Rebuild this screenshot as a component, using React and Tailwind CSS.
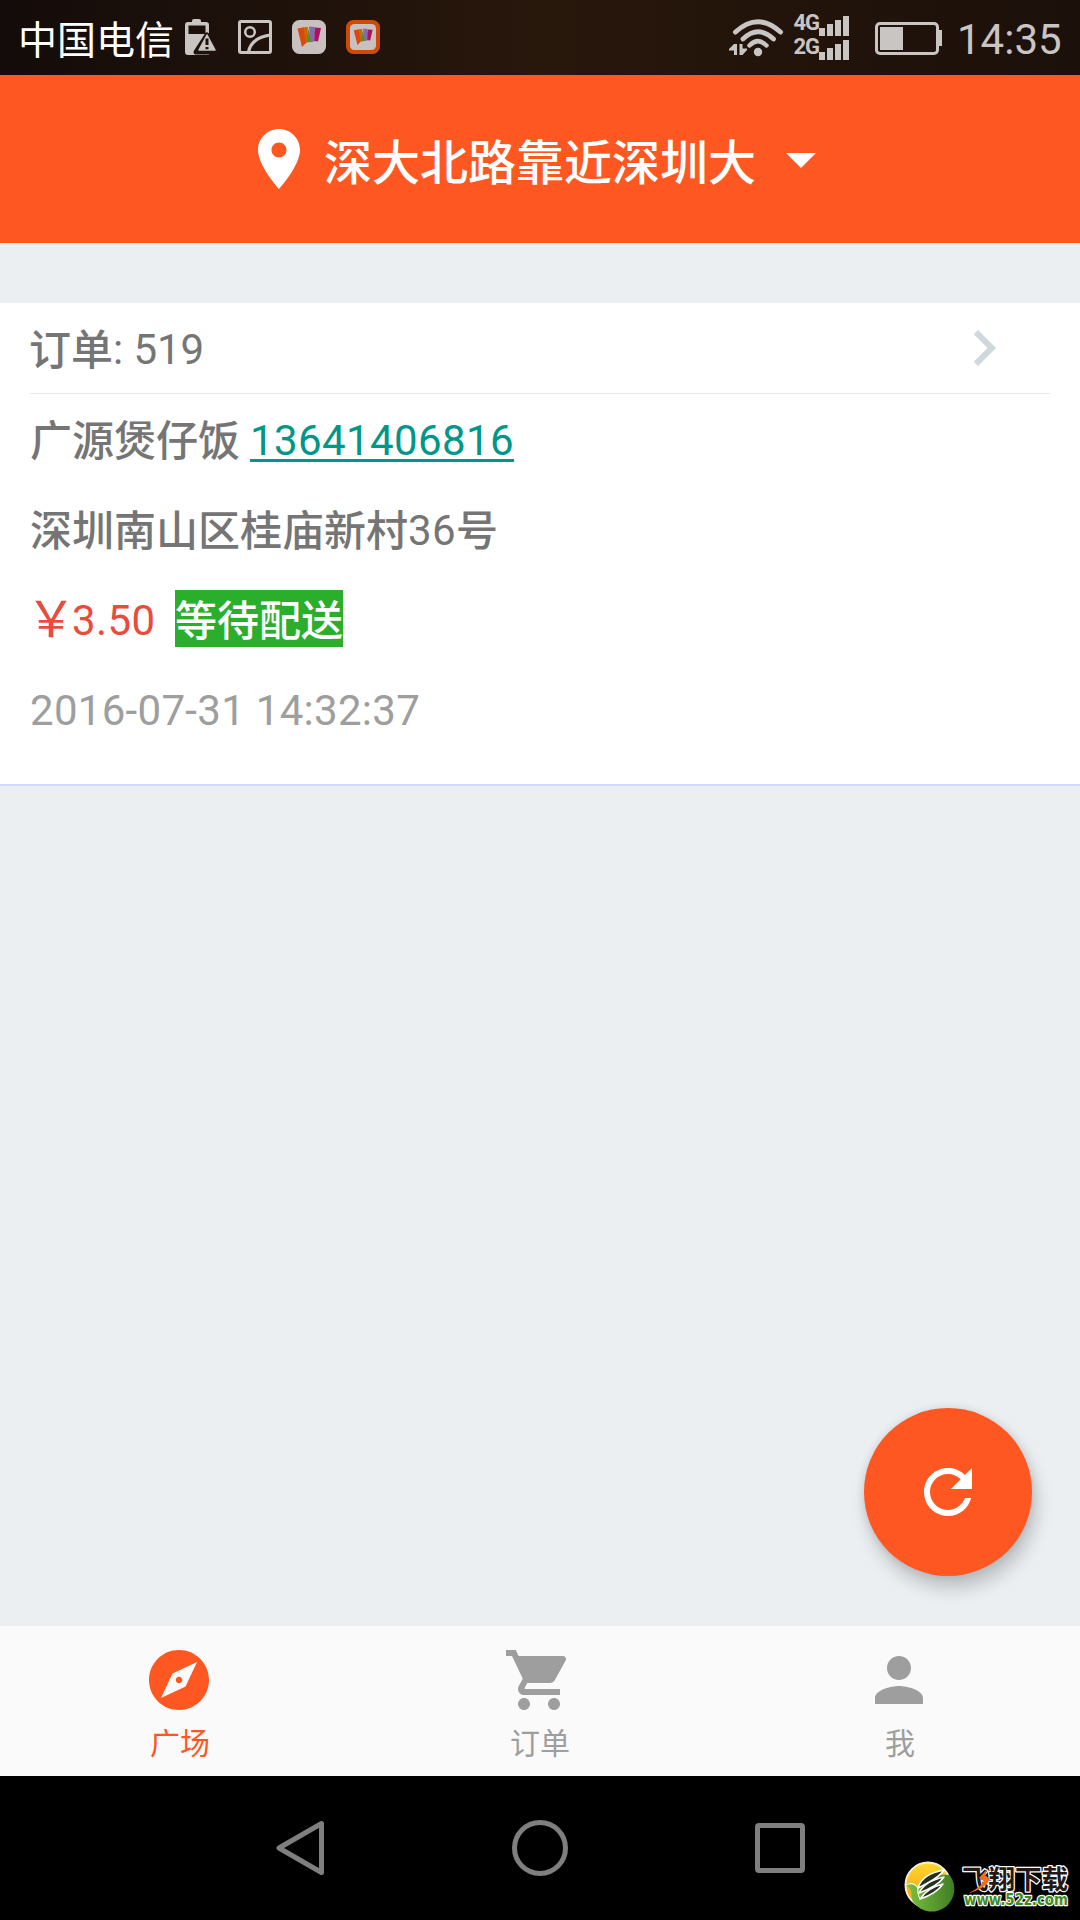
import React from "react";

const FONT = "font-['Roboto','Noto_Sans_CJK_SC',sans-serif]";

function MaterialIcon({ d, className = "" }) {
  return (
    <svg viewBox="0 0 24 24" className={"size-[72px] shrink-0 fill-current " + className}>
      <path d={d} />
    </svg>
  );
}

const ICONS = {
  place:
    "M12 2C8.13 2 5 5.13 5 9c0 5.25 7 13 7 13s7-7.75 7-13c0-3.87-3.13-7-7-7zm0 9.5c-1.38 0-2.5-1.12-2.5-2.5s1.12-2.5 2.5-2.5 2.5 1.12 2.5 2.5-1.12 2.5-2.5 2.5z",
  drop: "M7 10l5 5 5-5z",
  chevron: "M10 6L8.59 7.41 13.17 12l-4.58 4.59L10 18l6-6z",
  refresh:
    "M17.65 6.35C16.2 4.9 14.21 4 12 4c-4.42 0-7.99 3.58-7.99 8s3.57 8 7.99 8c3.73 0 6.84-2.55 7.73-6h-2.08c-.82 2.33-3.04 4-5.65 4-3.31 0-6-2.69-6-6s2.69-6 6-6c1.66 0 3.14.69 4.22 1.78L13 11h7V4l-2.35 2.35z",
  explore:
    "M12 10.9c-.61 0-1.1.49-1.1 1.1s.49 1.1 1.1 1.1c.61 0 1.1-.49 1.1-1.1s-.49-1.1-1.1-1.1zM12 2C6.48 2 2 6.48 2 12s4.48 10 10 10 10-4.48 10-10S17.52 2 12 2zm2.19 12.19L6 18l3.81-8.19L18 6l-3.81 8.19z",
  cart: "M7 18c-1.1 0-1.99.9-1.99 2S5.9 22 7 22s2-.9 2-2-.9-2-2-2zM1 2v2h2l3.6 7.59-1.35 2.45c-.16.28-.25.61-.25.96 0 1.1.9 2 2 2h12v-2H7.42c-.14 0-.25-.11-.25-.25l.03-.12.9-1.63h7.45c.75 0 1.41-.41 1.75-1.03l3.58-6.49c.08-.14.12-.31.12-.48 0-.55-.45-1-1-1H5.21l-.94-2H1zm16 16c-1.1 0-1.99.9-1.99 2s.89 2 1.99 2 2-.9 2-2-.9-2-2-2z",
  person:
    "M12 12c2.21 0 4-1.79 4-4s-1.79-4-4-4-4 1.79-4 4 1.79 4 4 4zm0 2c-2.67 0-8 1.34-8 4v2h16v-2c0-2.66-5.33-4-8-4z",
};

function BatteryAlertIcon() {
  return (
    <svg viewBox="0 0 32 38" className="h-[38px] w-8 overflow-visible">
      <path
        fill="#c9c5c3"
        fillRule="evenodd"
        d="M8 2Q8 0 10 0h5q2 0 2 2v1h5q3 0 3 3v30H4Q1 36 1 33V6q0-3 3-3h4zM4.500 6.500V15h17V6.500z"
      />
      <path d="M23 16L33 33H12z" fill="#1f120a" stroke="#1f120a" strokeWidth="5" strokeLinejoin="round" />
      <path d="M23 16L31 31H15z" fill="#c9c5c3" stroke="#c9c5c3" strokeWidth="1.500" strokeLinejoin="round" />
      <path d="M23 19.500v6.500M23 28v2.300" stroke="#1f120a" strokeWidth="3" />
    </svg>
  );
}

function PictureIcon() {
  return (
    <svg viewBox="0 0 34 34" className="size-[34px]" fill="none" stroke="#c9c5c3" strokeWidth="3">
      <rect x="1.500" y="1.500" width="31" height="31" rx="1.500" />
      <circle cx="12" cy="12" r="4.800" strokeWidth="2.500" />
      <path d="M10.500 32Q13 18 32 15" strokeWidth="3.200" />
    </svg>
  );
}

function CardsAppIcon({ framed }) {
  return (
    <svg viewBox="0 0 34 34" className="size-[34px]">
      <rect width="34" height="34" rx="7.500" fill={framed ? "#cd4a0b" : "#c9c1bf"} />
      {framed && <rect x="4" y="4" width="26" height="26" rx="4.500" fill="#c9c1bf" />}
      <g transform={framed ? "translate(3.400 3.400) scale(.8)" : undefined}>
        <path d="M23 7.500l6 .5-3 13.500-6-1z" fill="#b0105f" />
        <path d="M17 6.500l6 .5-.5 14.500-4 .5z" fill="#8869ae" />
        <path d="M16.500 9l3.500 13-7 .5z" fill="#5f8a35" />
        <path d="M10 7.500l6-.5-1.500 16-3 1z" fill="#c9660c" />
        <path d="M5.500 8.500l6-1 2 16-3.500 3.500z" fill="#da480e" />
      </g>
    </svg>
  );
}

function WifiIcon() {
  return (
    <svg viewBox="0 0 55 38" className="h-[38px] w-[55px]" fill="none" stroke="#c9c5c3" strokeLinecap="round">
      <path d="M6.500 13Q29 -7.500 51.500 13" strokeWidth="5" />
      <path d="M14 20Q29 5.500 44.500 20" strokeWidth="4.800" />
      <path d="M20.500 26.500Q29 18 37.500 26.500" strokeWidth="4.500" />
      <circle cx="29" cy="33" r="4.200" fill="#c9c5c3" stroke="none" />
      <path d="M8 25v11H5v-4.500H0V30l5-5zM10.500 25h3v4.500H18V31l-4.500 5h-3z" fill="#c9c5c3" stroke="none" />
    </svg>
  );
}

function SignalBars() {
  return (
    <div className="flex h-5 items-end gap-[2px]">
      <i className="h-2 w-1.5 bg-[#c9c5c3]" />
      <i className="h-3 w-1.5 bg-[#c9c5c3]" />
      <i className="h-4 w-1.5 bg-[#c9c5c3]" />
      <i className="h-5 w-1.5 bg-[#c9c5c3]" />
    </div>
  );
}

function SignalRow({ label }) {
  return (
    <div className="flex h-6 items-start">
      <span className="w-[26px] text-right text-[22px] leading-[17px] font-bold tracking-[-1px]">{label}</span>
      <div className="pt-[2px]">
        <SignalBars />
      </div>
    </div>
  );
}

function StatusBar() {
  return (
    <div className="flex h-[75px] items-start bg-linear-to-r from-[#140c0a] via-[#28170b] to-[#1b100a] text-[#c9c5c3]">
      <div className="ml-[18px] w-[166px] pt-[12px] text-[39px] leading-[58px] whitespace-nowrap text-white">中国电信</div>
      <div className="mt-[19px] flex items-start">
        <BatteryAlertIcon />
        <div className="mt-px ml-[22px] flex gap-5">
          <PictureIcon />
          <CardsAppIcon />
          <CardsAppIcon framed />
        </div>
      </div>
      <div className="ml-auto flex items-start pr-[18px]">
        <div className="mt-[19px]">
          <WifiIcon />
        </div>
        <div className="mt-[14px] ml-[9px]">
          <SignalRow label="4G" />
          <SignalRow label="2G" />
        </div>
        <svg viewBox="0 0 68 34" className="mt-[22px] ml-[26px] h-[34px] w-[68px]">
          <rect x="1.500" y="1.500" width="61" height="30" rx="3.500" fill="none" stroke="#c9c5c3" strokeWidth="3" />
          <rect x="5" y="5" width="23" height="23" fill="#c9c5c3" />
          <path d="M63 8h4v16h-4z" fill="#c9c5c3" />
        </svg>
        <div className="mt-[15px] ml-[14px] w-[105px] text-[42px] leading-[49px] whitespace-nowrap">14:35</div>
      </div>
    </div>
  );
}

function OrderCard() {
  return (
    <div className="h-[483px] border-b-2 border-[#d0dafb] bg-white px-[30px] text-[42px] whitespace-pre text-[#757575]">
      <div className="flex h-[91px] items-center justify-between border-b border-[#eaeaea] pr-[30px]">
        <span className="flex items-center pt-[3px]">
          <span className="-ml-px pt-[2px] font-medium">订单</span>
          <span className="tracking-[-.1px]">: 519</span>
        </span>
        <MaterialIcon d={ICONS.chevron} className="text-[#cfd8dc]" />
      </div>
      <div className="flex h-[90px] items-center pt-[3px]">
        <span className="pt-[2px] font-medium">广源煲仔饭</span>
        <span className="ml-[10px] tracking-[.4px] text-[#009688] underline decoration-[3px] underline-offset-[4px]">13641406816</span>
      </div>
      <div className="flex h-[90px] items-center pt-[3px]">
        <span className="pt-[2px] font-medium">深圳南山区桂庙新村</span>
        <span className="tracking-[.4px]">36</span>
        <span className="pt-[2px] font-medium">号</span>
      </div>
      <div className="flex h-[90px] items-center">
        <span className="flex w-[145px] items-center pt-[2px] text-[#e74c3c]">
          <span className="-ml-[4px] w-[46px] text-[50px] leading-[57px]">￥</span>
          <span className="tracking-[.4px]">3.50</span>
        </span>
        <span className="-mt-px h-[57px] bg-[#2bae2b] leading-[63px] font-medium text-white">等待配送</span>
      </div>
      <div className="flex h-[90px] items-center pt-[2px] text-[#9e9e9e]">
        <span className="tracking-[.3px]">2016-07-31 14:32:37</span>
      </div>
    </div>
  );
}

function Tab({ icon, label, active }) {
  return (
    <div className={"flex flex-1 flex-col items-center pt-[18px] " + (active ? "text-[#ff5722]" : "text-[#9e9e9e]")}>
      <MaterialIcon d={ICONS[icon]} className="mr-0.5" />
      <span className="mt-[6px] text-[30px] leading-[44px]">{label}</span>
    </div>
  );
}

function SiteLogo() {
  return (
    <svg viewBox="0 0 170 52" className="absolute right-[9px] bottom-[9px] h-[52px] w-[170px] overflow-visible">
      <defs>
        <linearGradient id="sun" x1="0" y1="0" x2="0" y2="1">
          <stop offset="0" stopColor="#ffd92e" />
          <stop offset="1" stopColor="#f39a13" />
        </linearGradient>
        <linearGradient id="leaf" x1="0" y1="0" x2="1" y2="0">
          <stop offset="0" stopColor="#7cc242" />
          <stop offset="1" stopColor="#3f7d25" />
        </linearGradient>
      </defs>
      <circle cx="27" cy="26" r="22.500" fill="url(#sun)" stroke="#f3efd2" strokeWidth="2" />
      <path d="M48.500 16A22.500 22.500 0 0 1 13 44C8 38 14 32 5 26Q12 22 17 29Q25 14 48.500 16z" fill="url(#leaf)" />
      <path d="M5 26Q12 22 17 29Q16 34 19 40" fill="none" stroke="#f4f7dc" strokeWidth="1.200" />
      <g fill="#26301c" stroke="#fff" strokeWidth="1.500" strokeLinejoin="round">
        <path d="M17 29Q21 15 43 11Q38 19 17 29z" />
        <path d="M18 34Q24 22 43 18Q37 27 18 34z" />
        <path d="M19 40Q26 29 42 25Q35 35 19 40z" />
      </g>
      <text
        x="61" y="30" fontSize="26" textLength="106" lengthAdjust="spacingAndGlyphs" fill="#231815" stroke="#fff" strokeWidth="2.500"
        strokeLinejoin="round" className="font-['Noto_Sans_CJK_SC',sans-serif] font-bold" style={{ paintOrder: "stroke" }}
      >
        飞翔下载
      </text>
      <path d="M68 34Q80 28 83 22L78 19 87 9 84 16 89 20Q84 30 68 34z" fill="#f36c21" />
      <text
        x="63" y="46" fontSize="16" textLength="104" lengthAdjust="spacingAndGlyphs" fill="#3f8a1f" stroke="#fff" strokeWidth="2.500"
        strokeLinejoin="round" className="font-['DejaVu_Sans',sans-serif] font-bold" style={{ paintOrder: "stroke" }}
      >
        www.52z.com
      </text>
    </svg>
  );
}

function SystemNav() {
  return (
    <div className="relative flex h-36 items-center justify-center bg-black">
      <div className="ml-px flex w-[529px] items-center justify-between">
        <svg viewBox="0 0 48 56" className="h-14 w-12" fill="none" stroke="#7f7f7f" strokeWidth="5" strokeLinejoin="round">
          <path d="M45.500 3.500v49L3 28z" />
        </svg>
        <div className="size-14 rounded-full border-[5px] border-[#7f7f7f]" />
        <div className="size-[50px] rounded-[4px] border-[5px] border-[#7f7f7f]" />
      </div>
      <SiteLogo />
    </div>
  );
}

export default function App() {
  return (
    <div className={"relative flex h-[1920px] w-[1080px] flex-col overflow-hidden bg-[#ebeff2] " + FONT}>
      <StatusBar />
      <header className="flex h-[168px] items-center justify-center gap-[9px] bg-[#ff5722] text-white">
        <MaterialIcon d={ICONS.place} />
        <span className="pt-[9px] text-[48px] leading-[70px] font-medium">深大北路靠近深圳大</span>
        <MaterialIcon d={ICONS.drop} />
      </header>
      <main className="flex-1 pt-[60px]">
        <OrderCard />
      </main>
      <button className="absolute right-12 bottom-[344px] flex size-[168px] items-center justify-center rounded-full bg-[#ff5722] text-white shadow-[4px_12px_18px_rgba(0,0,0,0.2),0_0_8px_rgba(0,0,0,0.1)]">
        <MaterialIcon d={ICONS.refresh} />
      </button>
      <nav className="flex h-[150px] bg-[#fafafa]">
        <Tab icon="explore" label="广场" active />
        <Tab icon="cart" label="订单" />
        <Tab icon="person" label="我" />
      </nav>
      <SystemNav />
    </div>
  );
}
